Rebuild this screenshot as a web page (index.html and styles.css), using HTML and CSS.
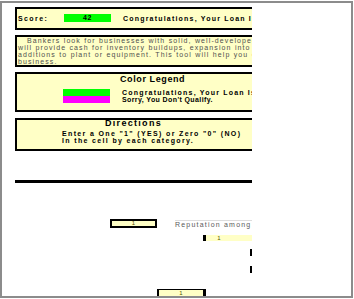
FILE: index.html
```html
<!DOCTYPE html>
<html lang="en">
<head>
    <meta charset="UTF-8">
    <title>Loan Qualification</title>

    <link rel="stylesheet" href="styles.css">

</head>
<body>
  <div id="frame">
    <div id="sheet">

      <div class="panel" id="score_panel">
        <span class="score_label">Score:</span>
        <span class="swatch green">42</span>
        <span class="result">Congratulations, Your Loan Is Approved!</span>
      </div>

      <div class="panel" id="intro">
        <p class="first">Bankers look for businesses with solid, well-developed business plans. A term loan</p>
        <p>will provide cash for inventory buildups, expansion into new markets, or for</p>
        <p>additions to plant or equipment. This tool will help you evaluate your</p>
        <p>business.</p>
      </div>

      <div class="panel" id="legend">
        <div class="title">Color Legend</div>
        <div class="legend_row">
          <span class="swatch green"></span>
          <span class="result">Congratulations, Your Loan Is Approved!</span>
        </div>
        <div class="legend_row">
          <span class="swatch magenta"></span>
          <span class="result sorry">Sorry, You Don't Qualify.</span>
        </div>
      </div>

      <div class="panel" id="directions">
        <div class="title">Directions</div>
        <div class="steps">
          Enter a One "1" (YES) or Zero "0" (NO)<br>
          In the cell by each category.
        </div>
      </div>

      <div id="rule"></div>

      <div class="row" id="row_one">
        <span class="cell">1</span>
        <span class="category">Reputation among suppliers</span>
      </div>

      <div class="row" id="row_two">
        <span class="cell">1</span>
      </div>

      <div class="edge_mark first"></div>
      <div class="edge_mark"></div>

      <div class="row" id="row_three">
        <span class="cell">1</span>
      </div>

    </div>
  </div>
</body>
</html>
```

FILE: styles.css
```css
body {
  margin: 0;
  font-family: "Liberation Sans", Arial, sans-serif;
  background: #ffffff;
}

#frame {
  margin-top: 1px;
  width: 349px;
  height: 293px;
  border: 2px solid #8c8c8c;
  overflow: hidden;
}

#sheet {
  width: 237px;
  height: 293px;
  margin-left: 13px;
  padding-top: 4px;
  box-sizing: border-box;
  overflow: hidden;
}

.panel {
  width: 300px;
  background: #ffffc6;
  border: 2px solid #000000;
  font-size: 7px;
  font-weight: bold;
  letter-spacing: 0.75px;
  color: #000000;
  white-space: nowrap;
}

#score_panel {
  height: 19px;
  display: flex;
  align-items: center;
}

.score_label {
  width: 46px;
  padding-left: 1px;
  letter-spacing: 1.4px;
}

.swatch {
  display: inline-block;
  flex-shrink: 0;
  width: 47px;
  height: 7px;
  line-height: 7px;
  text-align: center;
  letter-spacing: 0.5px;
}

#score_panel .swatch {
  height: 8px;
  line-height: 8px;
  margin-bottom: 1px;
}

.green {
  background: #00ff00;
}

.magenta {
  background: #ff00ff;
}

.result {
  margin-left: 12px;
  letter-spacing: 1.2px;
}

.result.sorry {
  letter-spacing: 0.4px;
}

#intro {
  margin-top: 5px;
  height: 28px;
  overflow: hidden;
}

#intro p {
  margin: 0;
  padding-left: 1px;
  font-weight: normal;
  letter-spacing: 1.1px;
  word-spacing: 0.3px;
  line-height: 7px;
  color: #4f4f4f;
}

#intro p.first {
  padding-left: 10px;
}

#legend {
  margin-top: 5px;
  height: 36px;
}

.title {
  font-size: 9px;
  letter-spacing: 0.6px;
  line-height: 8px;
  margin-top: 1px;
}

#legend .title {
  padding-left: 103px;
  margin-bottom: 6px;
}

.legend_row {
  display: flex;
  align-items: center;
  height: 7px;
  line-height: 7px;
  padding-left: 46px;
}

#directions {
  margin-top: 6px;
  height: 29px;
}

#directions .title {
  padding-left: 88px;
  margin-top: 0;
  line-height: 7px;
  letter-spacing: 1.3px;
}

.steps {
  padding-left: 45px;
  margin-top: 3px;
  line-height: 7px;
  letter-spacing: 1.35px;
}

#rule {
  width: 300px;
  height: 3px;
  margin-top: 29px;
  background: #000000;
}

.row {
  display: flex;
  align-items: center;
  font-size: 6px;
  white-space: nowrap;
}

.cell {
  display: inline-block;
  flex-shrink: 0;
  width: 43px;
  height: 5px;
  line-height: 5px;
  border: 2px solid #000000;
  background: #ffffc6;
  text-align: center;
  color: #555500;
}

#row_one {
  margin-top: 36px;
  margin-left: 95px;
  height: 9px;
}

.category {
  flex-shrink: 0;
  margin-left: 18px;
  color: #5a5a5a;
  letter-spacing: 1.2px;
  font-size: 7px;
  border-top: 1px solid #dddddd;
  line-height: 7px;
}

#row_two {
  margin-top: 7px;
  margin-left: 188px;
}

#row_two .cell {
  width: 26px;
  border-width: 0 0 0 3px;
  height: 6px;
  line-height: 6px;
  padding-right: 20px;
}

.edge_mark {
  width: 2px;
  height: 7px;
  margin-left: 235px;
  margin-top: 10px;
  background: #000000;
}

.edge_mark.first {
  margin-top: 8px;
}

#row_three {
  margin-top: 16px;
  margin-left: 142px;
}

#row_three .cell {
  width: 44px;
  border-width: 1px 3px 2px 2px;
  height: 6px;
  line-height: 6px;
}
```
